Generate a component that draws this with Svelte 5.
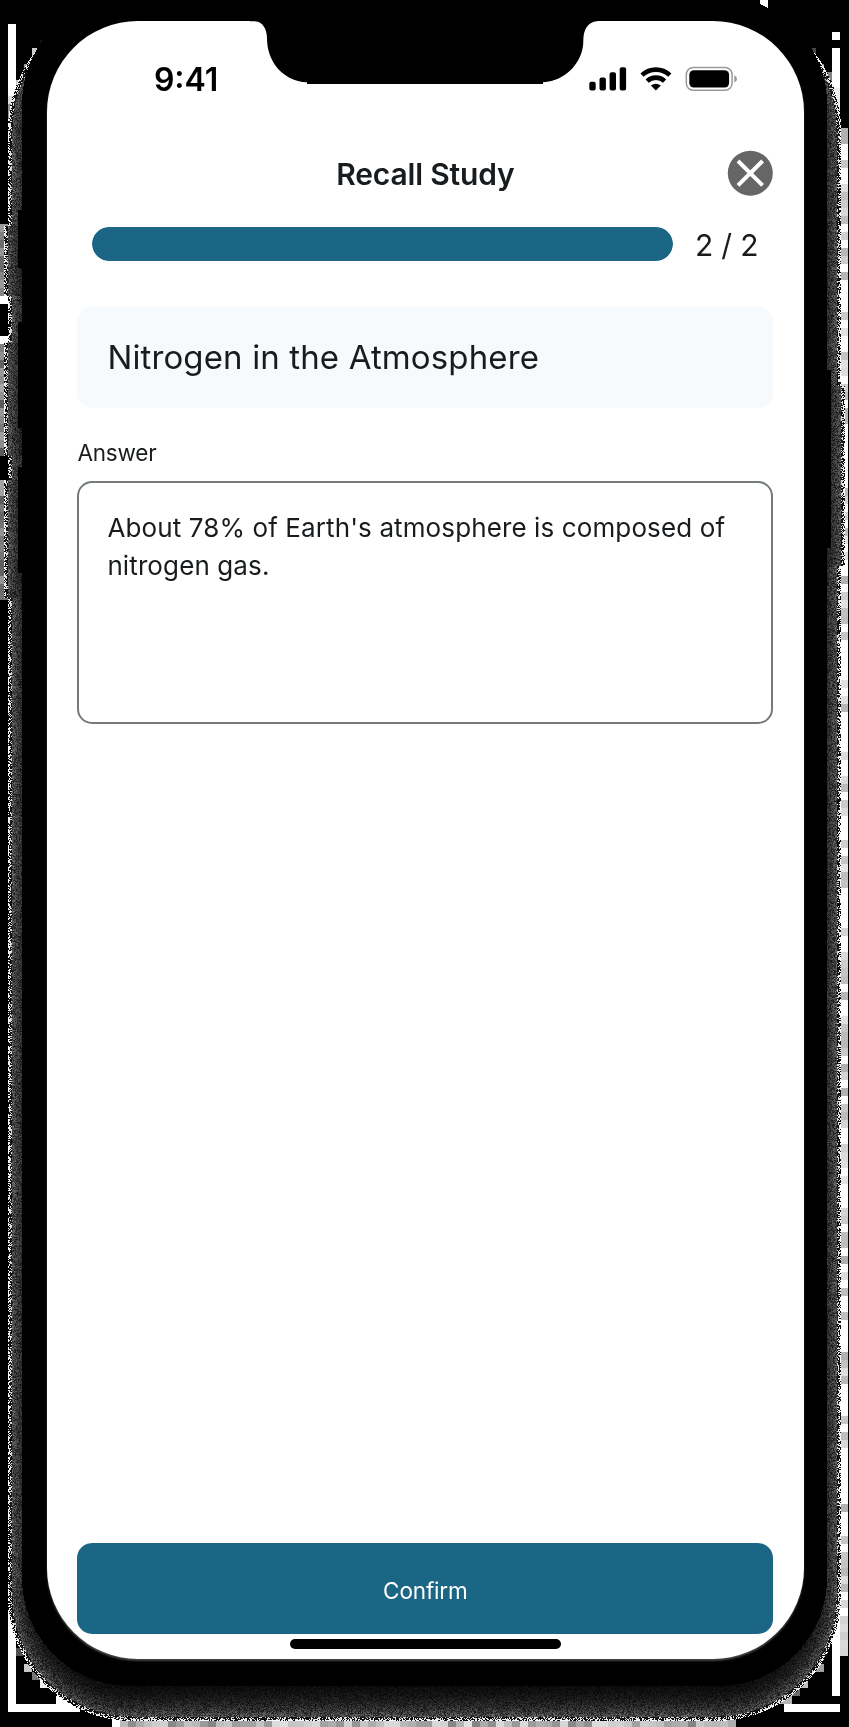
<script>
  import { onMount } from 'svelte';

  const W = 849;
  const H = 1727;
  let backdrop;
  const progress = { current: 2, total: 2 };

  // Signed distance to a rounded rectangle, negative inside.
  function distance(x, y, [x0, y0, x1, y1, r]) {
    const qx = Math.abs(x - (x0 + x1) / 2) - (x1 - x0) / 2 + r;
    const qy = Math.abs(y - (y0 + y1) / 2) - (y1 - y0) / 2 + r;
    return Math.hypot(Math.max(qx, 0), Math.max(qy, 0)) + Math.min(Math.max(qx, qy), 0) - r;
  }

  const within = (v, ranges) => ranges.some(([a, b]) => v >= a && v < b);

  onMount(() => {
    const ctx = backdrop.getContext('2d');
    let seed = 9241;
    const rnd = () => {
      seed = (seed * 1664525 + 1013904223) >>> 0;
      return seed / 4294967296;
    };
    const block = (x, y, w, h, v) => {
      ctx.fillStyle = `rgb(${v},${v},${v})`;
      ctx.fillRect(x, y, w, h);
    };
    block(0, 0, W, H, 0);
    block(8, 24, 8, 76, 255);
    block(8, 96, 8, 8, 220);
    block(8, 104, 8, 18, 150);
    block(32, 48, 8, 8, 205);
    block(40, 40, 8, 8, 18);
    block(24, 64, 8, 11, 150);
    block(16, 80, 8, 14, 190);
    block(760, 0, 8, 8, 255);
    block(760, 8, 8, 6, 60);
    block(832, 32, 8, 8, 255);
    block(832, 48, 8, 40, 255);
    block(832, 88, 8, 40, 235);
    block(808, 48, 8, 8, 70);
    block(816, 64, 8, 9, 150);
    block(824, 72, 8, 9, 130);
    for (let y = 224; y < 600; y += 8) {
      if ((y >= 304 && y < 336) || (y >= 456 && y < 480)) continue;
      block(0, y, 9, 8, y === 296 || y === 336 ? 255 : 90 + rnd() * 80);
    }
    for (let y = 128; y < 1650; y += 8) {
      const v = rnd();
      block(840, y, 8, 8, v < 0.5 ? 255 : 120 + v * 110);
    }
    block(8, 1610, 8, 102, 255);
    block(8, 1704, 72, 8, 255);
    block(16, 1648, 8, 8, 80);
    block(24, 1664, 8, 8, 200);
    block(32, 1672, 8, 8, 120);
    block(40, 1680, 8, 8, 240);
    block(56, 1696, 16, 8, 255);
    block(832, 1610, 8, 86, 255);
    block(784, 1704, 56, 8, 255);
    block(776, 1696, 16, 8, 180);
    block(792, 1688, 8, 8, 110);
    block(800, 1680, 8, 8, 190);
    block(816, 1664, 8, 8, 160);
    block(112, 1712, 8, 15, 255);
    for (let x = 120; x < 736; x += 8) block(x, 1719, 8, 8, 130 + rnd() * 95);

    const img = ctx.getImageData(0, 0, W, H);
    for (let y = 0; y < H; y++) {
      const left = within(y, [[210, 268], [322, 428], [467, 573]]) ? 4 : 0;
      const leftShadow = within(y, [[226, 296], [342, 456], [480, 598]]) ? 4 : 0;
      const right = within(y, [[370, 548]]) ? 4 : 0;
      const rightShadow = within(y, [[386, 566]]) ? 4 : 0;
      for (let x = 0; x < W; x++) {
        const isLeft = x < W / 2;
        const body = distance(x + (isLeft ? left : -right) + 0.5, y + 0.5, [22, -4, 827, 1686, 108]);
        const shadow = distance(x + (isLeft ? leftShadow : -rightShadow) + 0.5, y + 0.5, [8, 5, 841, 1721, 125]);
        let v = -1;
        if (body < 0) v = 0;
        else if (shadow < 0) {
          const depth = -shadow;
          const n = rnd();
          if (depth < 4.5) v = n < 0.35 + depth * 0.1 ? n * 60 : 255 - depth * 12;
          else v = 85 * Math.exp(-(depth - 4) / 16) * (0.35 + n * 1.1);
        }
        if (v >= 0) {
          const i = (y * W + x) * 4;
          img.data[i] = img.data[i + 1] = img.data[i + 2] = v;
        }
      }
    }
    ctx.putImageData(img, 0, 0);
  });
</script>

<div class="stage">
  <canvas class="backdrop" bind:this={backdrop} width={W} height={H}></canvas>
  <main class="screen">
    <svg class="notch" width="330" height="66" viewBox="262 20 330 66" aria-hidden="true">
      <path d="M250 20v1.200H255C262.500 21.500 267 29 267 38C267 62 283 81 307 82.300V84H543V82.300C566 81 583.300 62 583.300 41C583.300 29 588 22 597 21.200V20Z" />
    </svg>
    <header class="status">
      <span class="time">9:41</span>
      <svg class="indicators" width="150" height="26" viewBox="588 66 150 26" aria-hidden="true">
        <rect x="589.3" y="81.700" width="6.400" height="8.800" rx="2" />
        <rect x="599.5" y="77.500" width="6.400" height="13" rx="2" />
        <rect x="609.6" y="72.300" width="6.400" height="18.200" rx="2" />
        <rect x="619.7" y="67.300" width="6.400" height="23.200" rx="2" />
        <g class="waves">
          <path d="M642 75.200A20 20 0 0 1 669.800 75.200" />
          <path d="M647.200 81.100A12.500 12.500 0 0 1 664.600 81.100" />
        </g>
        <path d="M650.900 85.500Q655.900 81.800 660.900 85.500L655.900 90.500Z" />
        <rect class="shell" x="686.300" y="67.500" width="45.800" height="22.800" rx="7" />
        <rect x="689.300" y="70.300" width="39.800" height="17.200" rx="4.500" />
        <path class="cap" d="M734.300 75.300Q737 76.500 737 79T734.300 82.500Z" />
      </svg>
    </header>

    <div class="titlebar">
      <h1>Recall Study</h1>
      <button class="close" aria-label="Close">
        <svg width="46" height="46" viewBox="0 0 46 46">
          <circle cx="23.300" cy="23.200" r="22.500" />
          <path d="M11 11L35.600 35.400M35.600 11L11 35.400" />
        </svg>
      </button>
    </div>

    <div class="progress">
      <div class="track"><div class="fill" style="width: {(progress.current / progress.total) * 100}%"></div></div>
      <span>{progress.current} / {progress.total}</span>
    </div>

    <h2 class="question">Nitrogen in the Atmosphere</h2>
    <div class="label">Answer</div>
    <div class="answer">About 78% of Earth's atmosphere is composed of nitrogen gas.</div>

    <button class="confirm">Confirm</button>
    <div class="home"></div>
  </main>
</div>

<style>
  :global(body) { margin: 0; background: #000; }
  .stage {
    position: relative;
    box-sizing: border-box;
    width: 849px;
    height: 1727px;
    padding: 21px 45.500px 0 47.400px;
    overflow: hidden;
    font-family: Inter, "Liberation Sans", sans-serif;
    color: #191c1e;
  }
  .backdrop { position: absolute; inset: 0; display: block; }
  .screen {
    position: relative;
    box-sizing: border-box;
    display: flex;
    flex-direction: column;
    height: 1638px;
    padding: 0 30.200px 0 30px;
    border-radius: 91px;
    background: #fff;
    box-shadow: 0 2px 2px #444;
  }
  .notch { position: absolute; left: 214.600px; top: -1px; overflow: visible; }
  .status { display: flex; justify-content: space-between; height: 108px; box-sizing: border-box; padding: 45px 35.300px 0 76.500px; }
  .time { font-size: 32px; line-height: 28px; font-weight: 600; color: #000; }
  .indicators { display: block; }
  .waves { fill: none; stroke: #000; stroke-width: 4.600; }
  .shell { fill: none; stroke: #999; stroke-width: 1.500; }
  .cap { fill: #999; }
  .titlebar { display: grid; grid-template-columns: 46px 1fr 46px; align-items: center; height: 88px; }
  h1 { grid-column: 2; margin: 0; padding-top: 1px; text-align: center; font-size: 30px; line-height: 40px; font-weight: 600; letter-spacing: -.180px; }
  .close { width: 46px; height: 46px; padding: 0; border: 0; background: none; }
  .close svg { display: block; }
  .close circle { fill: #666; }
  .close path { stroke: #fff; stroke-width: 4; fill: none; }
  .progress { display: flex; align-items: center; height: 34px; margin-top: 10px; padding: 0 14.600px; gap: 22.300px; }
  .track { flex: none; width: 580.700px; height: 34px; border-radius: 17px; overflow: hidden; background: #dce4e9; }
  .fill { height: 100%; border-radius: 17px; background: #1c6685; }
  .progress span { padding-top: 1px; font-size: 30px; letter-spacing: -.200px; white-space: nowrap; }
  .question { margin: 46.400px 0 0; padding: 0 30px; height: 100.600px; border-radius: 15px; background: #f6fafd; font-size: 33px; line-height: 101.500px; font-weight: 400; letter-spacing: .130px; white-space: nowrap; }
  .label { margin-top: 29px; height: 32px; font-size: 22.500px; line-height: 32px; letter-spacing: -.180px; }
  .answer { box-sizing: border-box; margin-top: 12px; height: 243px; padding: 26px 20px 26px 28px; border: 2px solid #757a7c; border-radius: 15px; font-size: 26px; line-height: 38px; letter-spacing: .115px; }
  .confirm { margin-top: auto; flex: none; height: 91px; padding: 4px 0 0; border: 0; border-radius: 15px; background: #1c6685; color: #fff; font: 400 22.500px Inter, sans-serif; letter-spacing: -.150px; }
  .home { flex: none; align-self: center; width: 271px; height: 10px; margin: 5px 0 10px; border-radius: 5px; background: #000; }
</style>
